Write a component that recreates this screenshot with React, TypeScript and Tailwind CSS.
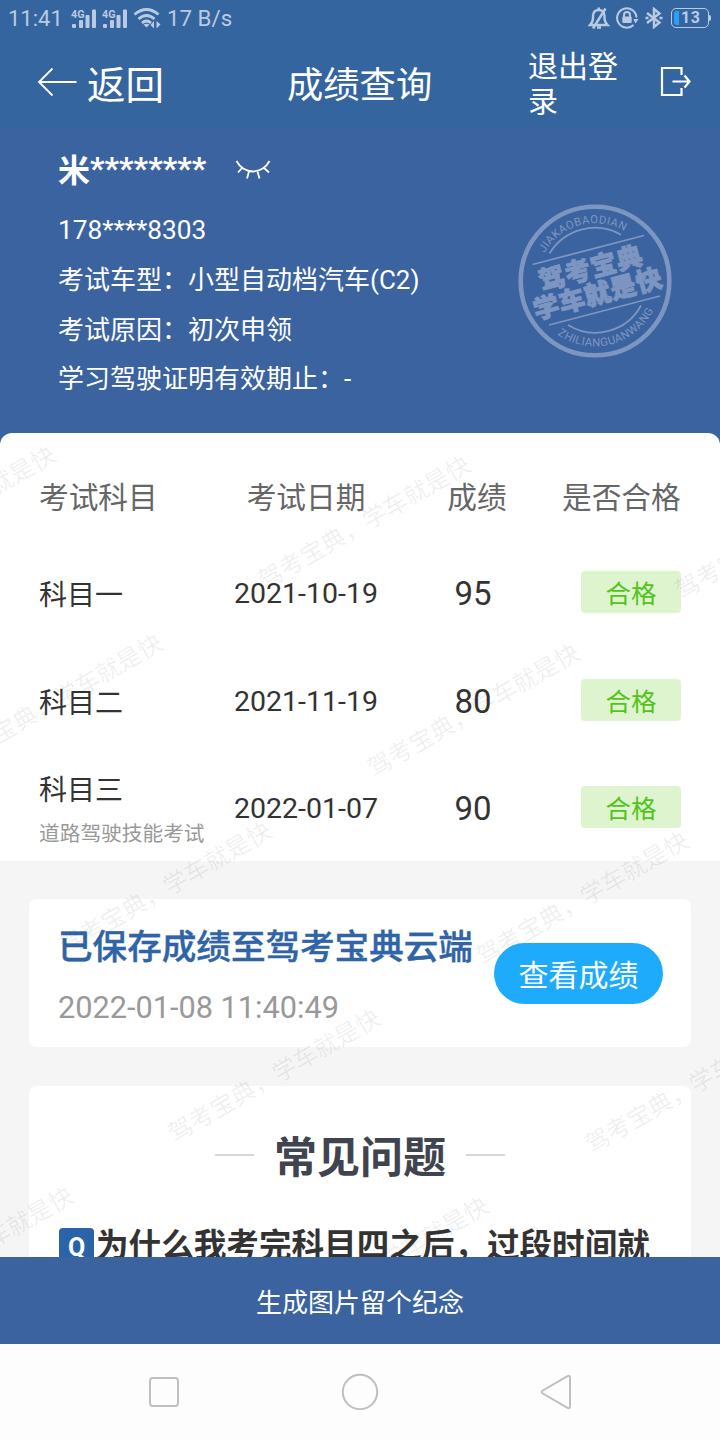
import React from "react";

const results = [
  { subject: "科目一", note: "", date: "2021-10-19", score: "95" },
  { subject: "科目二", note: "", date: "2021-11-19", score: "80" },
  { subject: "科目三", note: "道路驾驶技能考试", date: "2022-01-07", score: "90" },
];

// Centre points of the repeated watermark, relative to the page content.
const marks = [
  [-51, 512], [56, 700], [165, 888], [274, 1075], [382, 1263], [-33, 1253],
  [364, 522], [473, 710], [582, 898], [691, 1086], [781, 532],
];

function Signal() {
  return (
    <svg width="28" height="22" viewBox="0 0 28 22" fill="currentColor">
      <text x="0" y="8.5" fontSize="10.5" fontWeight="700" textLength="13.5" lengthAdjust="spacingAndGlyphs">4G</text>
      <rect x="1" y="15" width="4" height="4" rx="1" />
      <rect x="8" y="11" width="4" height="8" rx="1" />
      <rect x="14.5" y="6" width="4" height="13" rx="1" />
      <rect x="21" y="0.5" width="4" height="18.5" rx="1" />
    </svg>
  );
}

function StatusBar() {
  return (
    <div className="flex h-9 items-center pl-2 text-[#b9cbe2]">
      <span className="w-[63px] pt-[1px] text-[22px] leading-9">11:41</span>
      <div className="flex w-[62px] gap-[3px] pt-[3px]">
        <Signal />
        <Signal />
      </div>
      <svg width="30" height="24" viewBox="0 0 30 24" fill="none" stroke="currentColor" strokeWidth="2.8" className="mt-[2px]">
        <path d="M1.500 7.500 Q13.500 -2.500 25.500 7.500" />
        <path d="M5.500 12 Q13.500 5 21.500 12" />
        <path d="M9 16 Q13.500 12 18 16" />
        <path d="M10.500 17.500 L13.500 20.500 L16.500 17.500 Q13.500 15.800 10.500 17.500Z" fill="currentColor" stroke="none" />
        <path d="M21 14 V21.500 L17.500 18Z M23.500 14 V21.500 L27.500 17.500Z" fill="currentColor" stroke="none" />
      </svg>
      <span className="ml-1 text-[22.3px] leading-9">17 B/s</span>
      <div className="ml-auto flex items-center pr-[9px]">
        <svg width="22" height="24" viewBox="0 0 22 24" fill="none" stroke="currentColor" strokeWidth="2.4">
          <path d="M2 19 H19.500 Q16.500 16 16.500 12 V9.500 Q16 4 10.800 4 Q5.500 4 5 9.500 V12 Q5 16 2 19Z" />
          <path d="M10.800 1.500 V4 M9 21.500 H13" />
          <path d="M17.500 2.500 L5 22.500" />
        </svg>
        <svg width="24" height="24" viewBox="0 0 24 24" fill="none" stroke="currentColor" strokeWidth="2" className="ml-[5px]">
          <path d="M21.500 11.500 A9.700 9.700 0 1 0 18.500 19" />
          <path d="M18.300 13 H23.500 L20.500 17.500Z" fill="currentColor" stroke="none" />
          <rect x="7.300" y="10.500" width="9.400" height="6.500" rx="1" fill="currentColor" stroke="none" />
          <path d="M9 11 V9 A3 3 0 0 1 15 9 V11" />
        </svg>
        <svg width="18" height="22" viewBox="0 0 18 22" fill="none" stroke="currentColor" strokeWidth="2.400" className="ml-[6px]">
          <path d="M2 6 L14.500 15.500 L9 20 V2 L14.500 6.500 L2 16" />
          <path d="M0.500 11 H3.500 M14.500 11 H17.500" />
        </svg>
        <div className="ml-2 flex items-center">
          <div className="flex h-5 w-[38px] items-center rounded-[5px] border-[1.5px] border-[#b9cbe2] pl-[2px]">
            <span className="h-[14px] w-[5px] rounded-l-[3px] bg-[#2ba0f8]" />
            <span className="ml-[2px] text-[16px] leading-4 font-bold tracking-[0.5px]">13</span>
          </div>
          <span className="h-[6px] w-[2px] rounded-r bg-[#b9cbe2]" />
        </div>
      </div>
    </div>
  );
}

function Stamp() {
  return (
    <svg width="154" height="154" viewBox="-77 -77 154 154" className="text-[#7d96c1]" fill="currentColor">
      <defs>
        <path id="arcTop" d="M-50.500 -28 A57.700 57.700 0 0 1 37.100 -44.200" />
        <path id="arcBottom" d="M-37.500 53.500 A65.300 65.300 0 0 0 61.400 22.300" />
      </defs>
      <circle r="74.3" fill="none" stroke="currentColor" strokeWidth="4.600" />
      <g fill="none" stroke="currentColor" strokeWidth="1.800">
        <path d="M-45.500 -27.500 A53 53 0 0 1 26 -46.300" />
        <path d="M-27 44 A52 52 0 0 0 46 24.500" />
        <path d="M-62.500 -16.500 L49 -45.500 M-46 44 L65 15" />
      </g>
      <text fontSize="11.3">
        <textPath href="#arcTop" textLength="92">JIAKAOBAODIAN</textPath>
      </text>
      <text fontSize="11.3">
        <textPath href="#arcBottom" textLength="112">ZHILIANGUANWANG</textPath>
      </text>
      <g transform="rotate(-14.7)" fontWeight="900" stroke="currentColor" strokeWidth="0.8">
        <text x="-54" y="-4" fontSize="26" textLength="106">驾考宝典</text>
        <text x="-67" y="22.500" fontSize="26" textLength="132">学车就是快</text>
      </g>
    </svg>
  );
}

function Header() {
  return (
    <header className="flex h-[91px] items-start bg-[#35659f] text-white">
      <svg width="40" height="30" viewBox="0 0 40 30" className="mt-[31px] ml-[37px]" fill="none" stroke="white" strokeWidth="1.8">
        <path d="M39.500 15 H2 M15.500 1.500 L2 15 L15.500 28.500" />
      </svg>
      <span className="mt-[24px] ml-[10px] w-[200px] text-[38.5px] leading-[52px]">返回</span>
      <h1 className="mt-[24px] w-[241px] text-[36.3px] leading-[52px]">成绩查询</h1>
      <span className="mt-[13px] w-[92px] text-[30px] leading-[35px]">退出登录</span>
      <svg width="32" height="32" viewBox="0 0 32 32" className="mt-[30px] ml-[40px]" fill="none" stroke="white" strokeWidth="2.2">
        <path d="M21.500 9 V2 H2 V29 H21.500 V22" />
        <path d="M12.500 15.500 H29.500 M24.500 9.500 L29.500 15.500 L24.500 21.500" />
      </svg>
    </header>
  );
}

function Profile() {
  return (
    <section className="flex h-[306px] bg-[#3b63a0] pl-[58px] text-white">
      <div className="w-[460px] pt-[18px] text-[26px]">
        <div className="flex h-12 items-center text-[32px] leading-12 font-bold">
          <span className="pt-[4px]">米</span>
          <span className="-mt-[3px]">********</span>
          <svg width="36" height="22" viewBox="0 0 36 22" className="mt-[1px] ml-[29px]" fill="none" stroke="white" strokeWidth="1.8">
            <path d="M1.500 2 Q7 12 18 12.500 Q29 12 34.500 2" />
            <path d="M7.500 8.500 L3 13.500 M14 12.500 L12 19.500 M22.500 12.500 L24.500 19.500 M28.500 8.500 L34 13.500" />
          </svg>
        </div>
        <p className="mt-[12px] text-[26.2px] leading-[50px]">178****8303</p>
        <p className="pt-[1px] leading-[49px]">考试车型：小型自动档汽车(C2)</p>
        <p className="leading-[50px]">考试原因：初次申领</p>
        <p className="leading-[49px]">学习驾驶证明有效期止：-</p>
      </div>
      <div className="pt-[77px]">
        <Stamp />
      </div>
    </section>
  );
}

function Results() {
  return (
    <div className="bg-[#3b63a0]">
      <section className="h-[428px] rounded-t-[12px] bg-white pt-[11px] pl-[39px] text-[#333]">
        <div className="grid h-[108px] grid-cols-[167px_200px_142px_134px] items-center pt-[1px] text-[29.7px] text-[#666]">
          <span>考试科目</span>
          <span className="text-center">考试日期</span>
          <span className="text-center">成绩</span>
          <span className="ml-[14px] whitespace-nowrap">是否合格</span>
        </div>
        {results.map((r) => (
          <div key={r.subject} className="grid h-[107.5px] grid-cols-[167px_200px_134px_141px] items-start">
            {r.note ? (
              <div className="whitespace-nowrap">
                <p className="-mt-[8px] text-[28px] leading-[64px]">{r.subject}</p>
                <p className="text-[20.7px] leading-[22px] text-[#999]">{r.note}</p>
              </div>
            ) : (
              <p className="pt-[22px] text-[28px] leading-[44px]">{r.subject}</p>
            )}
            <span className="pt-[20.4px] text-center text-[28.5px] leading-[44px]">{r.date}</span>
            <span className="pt-[20.4px] text-center text-[33px] leading-[44px]">{r.score}</span>
            <span className="mt-[19px] ml-auto h-[42px] w-[100px] rounded-[4px] bg-[#def4cf] text-center text-[25.5px] leading-[46px] text-[#52c41a]">
              合格
            </span>
          </div>
        ))}
      </section>
    </div>
  );
}

function SavedCard() {
  return (
    <section className="mx-[29px] mt-[38px] flex h-[148px] justify-between rounded-[8px] bg-white pr-[28px] pl-[29px]">
      <div className="pt-[21px] whitespace-nowrap">
        <h2 className="pt-[1px] text-[34.6px] leading-[52px] font-medium text-[#2f64a6] [-webkit-text-stroke:0.4px_#2f64a6]">
          已保存成绩至驾考宝典云端
        </h2>
        <p className="mt-[13px] text-[30.7px] leading-[44px] text-[#999]">2022-01-08 11:40:49</p>
      </div>
      <button className="relative z-20 mt-[44px] h-[61px] w-[169px] shrink-0 rounded-full bg-[#1fabfb] text-[30px] leading-[66px] text-white">
        查看成绩
      </button>
    </section>
  );
}

function Faq() {
  return (
    <section className="mx-[29px] mt-[39px] h-[171px] overflow-hidden rounded-t-[8px] bg-white">
      <div className="flex h-[138px] items-center justify-center gap-5">
        <span className="h-[2px] w-[39px] bg-[#d5d7db]" />
        <h2 className="pt-[6px] text-[43px] leading-[60px] font-bold text-[#40444f]">常见问题</h2>
        <span className="h-[2px] w-[39px] bg-[#d5d7db]" />
      </div>
      <div className="flex pl-[30px] whitespace-nowrap">
        <span className="mt-[4px] h-[36px] w-[35px] rounded-[4px] bg-[#2a63a8] text-center text-[25px] leading-[40px] font-bold text-white">
          Q
        </span>
        <p className="ml-[2px] text-[32.6px] leading-[44px] font-bold text-[#333]">为什么我考完科目四之后，过段时间就</p>
      </div>
    </section>
  );
}

function Watermarks() {
  return (
    <svg width="720" height="1257" className="pointer-events-none absolute top-0 left-0 z-10">
      {marks.map(([x, y]) => (
        <text
          key={`${x}-${y}`}
          transform={`translate(${x} ${y}) rotate(-30)`}
          textAnchor="middle"
          y="9"
          fontSize="24"
          fill="#000"
          fillOpacity="0.07"
        >
          驾考宝典，学车就是快
        </text>
      ))}
    </svg>
  );
}

export default function App() {
  return (
    <div
      lang="zh-CN"
      className="relative flex h-[1440px] w-[720px] flex-col overflow-hidden bg-[#f5f5f5] font-['Roboto','Noto_Sans_CJK_SC',sans-serif]"
    >
      <div className="bg-[#35659f]">
        <StatusBar />
        <Header />
      </div>
      <Profile />
      <Results />
      <SavedCard />
      <Faq />
      <Watermarks />
      <button className="h-[87px] w-full shrink-0 bg-[#3b63a0] pt-[6px] text-[26px] text-white">生成图片留个纪念</button>
      <nav className="flex flex-1 items-center justify-between bg-[#fdfdfd] px-[148px]">
        <svg width="32" height="32" viewBox="0 0 32 32" fill="none" stroke="#bfbfbf" strokeWidth="2">
          <rect x="2" y="2" width="28" height="28" rx="3" />
        </svg>
        <svg width="38" height="38" viewBox="0 0 38 38" fill="none" stroke="#bfbfbf" strokeWidth="2">
          <circle cx="19" cy="19" r="17.2" />
        </svg>
        <svg width="32" height="36" viewBox="0 0 32 36" fill="none" stroke="#bfbfbf" strokeWidth="2">
          <path d="M27.500 2.200 Q30 0.800 30 4 V32 Q30 35.200 27.500 33.800 L2.800 19.500 Q0.800 18 2.800 16.500Z" />
        </svg>
      </nav>
    </div>
  );
}
